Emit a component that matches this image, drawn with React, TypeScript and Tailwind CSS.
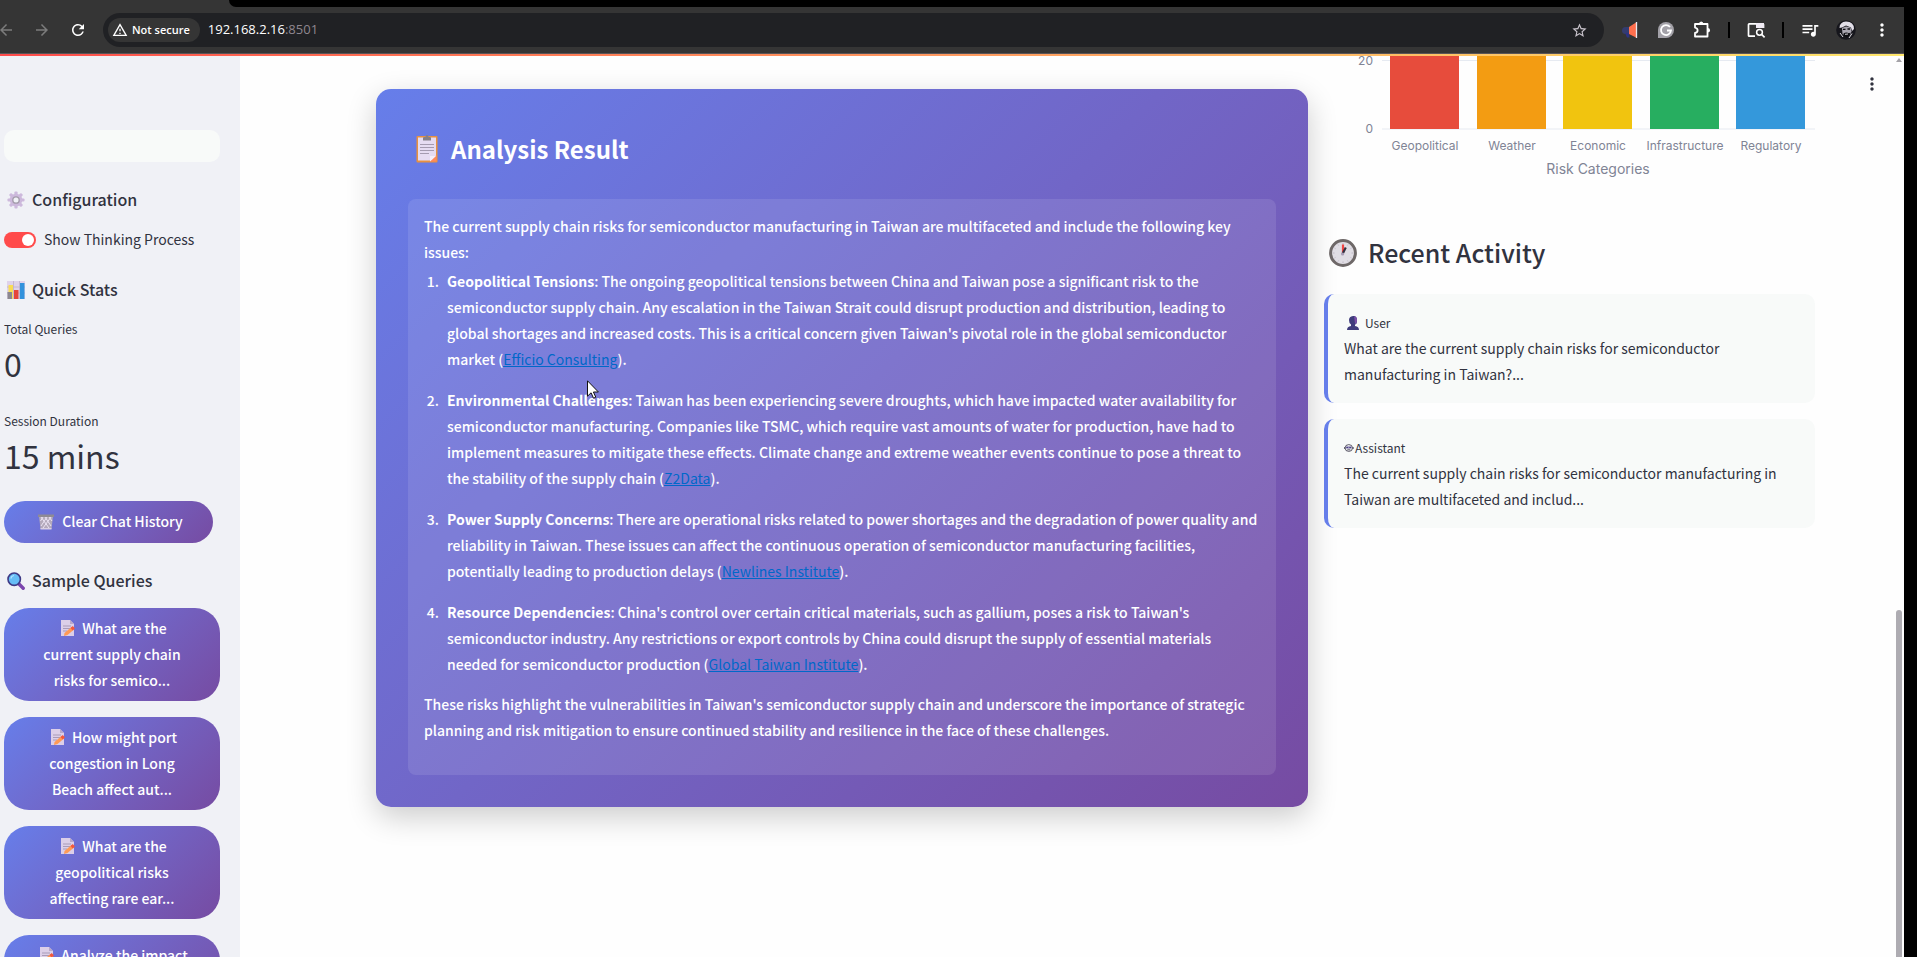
import type { ReactNode } from "react";
import {
  MdArrowBack,
  MdArrowForward,
  MdMoreVert,
  MdOutlineWarningAmber,
  MdQueueMusic,
  MdRefresh,
  MdStarBorder,
} from "react-icons/md";

/* ---------- pictograms ---------- */

type IconProps = { className?: string };

const Clipboard = ({ className }: IconProps) => (
  <svg viewBox="0 0 22 28" className={className} aria-hidden="true">
    <rect x="0.5" y="1" width="21" height="26.5" rx="1" fill="#e8913f" />
    <rect x="2" y="2.5" width="18" height="23" fill="#e6dcf2" />
    <path d="M7 5.5V3q0-1 1-1h1.500Q9.500 0 11 0t1.500 2H14q1 0 1 1v2.500z" fill="#858088" />
    <path d="M4 9.500h14M4 12.500h14M4 15.500h14M4 18.500h9" stroke="#a59bb0" strokeWidth="1.100" />
    <path d="M20.500 20v6.500H14z" fill="#ff8a5c" />
    <path d="M14 26.500V21h6z" fill="#f6effa" />
  </svg>
);

const Gear = ({ className }: IconProps) => (
  <svg viewBox="0 0 20 20" className={className} aria-hidden="true">
    <g fill="#cdb9dc">
      <rect x="8.200" y="0.500" width="3.600" height="19" rx="1.200" />
      <rect x="8.200" y="0.500" width="3.600" height="19" rx="1.200" transform="rotate(45 10 10)" />
      <rect x="8.200" y="0.500" width="3.600" height="19" rx="1.200" transform="rotate(90 10 10)" />
      <rect x="8.200" y="0.500" width="3.600" height="19" rx="1.200" transform="rotate(135 10 10)" />
      <circle cx="10" cy="10" r="7" />
    </g>
    <circle cx="10" cy="10" r="4.300" fill="#a49cab" />
    <circle cx="10" cy="10" r="2.800" fill="#f0f1f6" />
  </svg>
);

const BarChart = ({ className }: IconProps) => (
  <svg viewBox="0 0 18 18" className={className} aria-hidden="true">
    <rect width="18" height="18" fill="#ded2ea" />
    <path d="M6.500 0v18M12.500 0v18M0 6h18M0 12h18" stroke="#bdb0ca" strokeWidth="0.800" />
    <rect x="1.500" y="4" width="4.500" height="14" fill="#f8dc55" />
    <rect x="0.500" y="11" width="4.500" height="7" fill="#8c8890" />
    <rect x="7" y="9" width="4.500" height="9" fill="#e5443b" />
    <rect x="13" y="2" width="4.500" height="16" fill="#3292dc" />
  </svg>
);

const Wastebasket = ({ className }: IconProps) => (
  <svg viewBox="0 0 16 16" className={className} aria-hidden="true">
    <path d="M1 2h14l-1.500 13h-11z" fill="#b4aabb" />
    <path
      d="M3 3l8 11M7 3l6 9M11 3l3 4M13 3L5 14M9 3l-6 9M5 3L2.500 7"
      stroke="#ece4f4"
      strokeWidth="1"
    />
    <path d="M0 0.500h16V3H0z" fill="#8f8b94" />
    <path d="M2.500 14h11v1.500h-11z" fill="#d9cfe2" />
  </svg>
);

const Magnifier = ({ className }: IconProps) => (
  <svg viewBox="0 0 18 18" className={className} aria-hidden="true">
    <path d="M11.500 11.500l4.700 4.700" stroke="#7b45ad" strokeWidth="3.400" strokeLinecap="round" />
    <circle cx="7.200" cy="7.200" r="6.200" fill="#66bdf5" stroke="#3e3a86" strokeWidth="1.600" />
    <path d="M3.800 6.500A4 4 0 0 1 7 3.500" stroke="#b5e3ff" strokeWidth="1.200" fill="none" />
  </svg>
);

const Memo = ({ className }: IconProps) => (
  <svg viewBox="1 0 14 16" className={className} aria-hidden="true">
    <path d="M1 0h9l4 4v12H1z" fill="#dccfe8" />
    <path d="M10 0l4 4h-4z" fill="#b9a8c9" />
    <path d="M3 6h8M3 8.500h7M3 11h4" stroke="#a99bb8" strokeWidth="1" />
    <path d="M4.500 13l7-6 2.500 2.500-6.500 5.500-3.500 1z" fill="#ff9a55" />
    <path d="M10.500 8l2.300-2 2.200 2.500-2.300 2z" fill="#f2583f" />
  </svg>
);

const Clock = ({ className }: IconProps) => (
  <svg viewBox="0 0 28 28" className={className} aria-hidden="true">
    <circle cx="14" cy="14" r="12.400" fill="#e0dde4" stroke="#6e6868" strokeWidth="3" />
    <path
      d="M14 4v1.500M14 22.500V24M4 14h1.500M22.500 14H24M19 5.500l-.6 1M9 5.500l.6 1M22.500 9l-1 .6M5.500 9l1 .6M22.500 19l-1-.6M5.500 19l1-.6M19 22.500l-.6-1M9 22.500l.6-1"
      stroke="#b9b3bf"
      strokeWidth="0.900"
    />
    <path d="M14 14V5.500" stroke="#f04545" strokeWidth="2.200" />
    <path d="M13.500 15l3.300-6.500" stroke="#33303f" strokeWidth="2.200" />
    <circle cx="13.600" cy="15" r="1.600" fill="#a79bb5" />
  </svg>
);

const Bust = ({ className }: IconProps) => (
  <svg viewBox="0 0 14 14" className={className} aria-hidden="true">
    <path d="M1 14q0-3.500 4-4V8.500Q3 7.500 3 4t4-4 4 4-2 4.500V10q4 .5 4 4z" fill="#3f3c7c" />
    <path d="M8 0.200q3 .8 3 3.800 0 3.200-1.800 4.300z" fill="#7b4fa8" />
  </svg>
);

const Robot = ({ className }: IconProps) => (
  <svg viewBox="0 0 10 10" className={className} aria-hidden="true">
    <ellipse cx="4.800" cy="5" rx="3.700" ry="3.400" fill="none" stroke="#4a4658" strokeWidth="0.900" />
    <path d="M0.400 4v2M9.200 4v2M3.300 6.800h3" stroke="#4a4658" strokeWidth="0.900" />
    <path d="M2.200 4.500h5.200" stroke="#4a3f86" strokeWidth="1.800" />
    <path d="M4.400 4.500h.8" stroke="#cfc4e0" strokeWidth="1.200" />
  </svg>
);

/* ---------- browser toolbar ---------- */

const Megaphone = () => (
  <svg viewBox="0 0 20 20" className="size-5" aria-hidden="true">
    <path d="M2 10.500Q2 7 5.500 7H10v7H5.500Q2 14 2 10.500z" fill="#343c70" />
    <path d="M5 13h4l.5 4.500H7z" fill="#2c3380" />
    <path d="M9 7l7-4.500v15L9 14z" fill="#ff6f4d" />
    <path d="M16.500 2v16" stroke="#e9e6ee" strokeWidth="1.300" />
  </svg>
);

const Grammar = () => (
  <svg viewBox="0 0 20 20" className="size-5" aria-hidden="true">
    <path d="M10 2a8 8 0 1 1 0 16H2v-8a8 8 0 0 1 8-8z" fill="#a3a1a8" />
    <path d="M14 7a5 5 0 1 0 1 3.500h-4" fill="none" stroke="#fff" strokeWidth="1.800" />
  </svg>
);

const Puzzle = () => (
  <svg viewBox="0 0 20 20" className="size-5" aria-hidden="true">
    <path
      d="M3 4h12.500v12.500H3V13q2.600-.4 2.600-2.700T3 7.600z"
      fill="none"
      stroke="#fff"
      strokeWidth="1.800"
      strokeLinejoin="round"
    />
    <path d="M7 4a2.200 2.600 0 0 1 4.400 0zM15.500 8a2.600 2.200 0 0 1 0 4.400z" fill="#fff" />
  </svg>
);

const SideSearch = () => (
  <svg viewBox="0 0 20 20" className="size-5" aria-hidden="true">
    <path d="M9 16.200H3.200q-.7 0-.7-.7V4.500q0-.7.700-.7h13.600q.700 0 .7.700V8" fill="none" stroke="#fff" strokeWidth="1.700" />
    <path d="M10 3h8v5h-8z" fill="#f1ecf5" />
    <circle cx="13.500" cy="12.300" r="2.900" fill="#353535" stroke="#fff" strokeWidth="1.500" />
    <path d="M15.600 14.400l3 3" stroke="#fff" strokeWidth="1.700" />
  </svg>
);

const Avatar = () => (
  <svg viewBox="0 0 20 20" className="size-5" aria-hidden="true">
    <circle cx="10" cy="10" r="9.800" fill="#16161c" />
    <path d="M3.500 8q0-6 6.500-6.500Q18 1.500 18 9l-2 2-1-3.500-5-2-4 2z" fill="#e2dfe8" />
    <path d="M6 8l4-1.500 4.500 1 1 4-1.500 3.500-4 2-3.500-3z" fill="#a9a6b0" />
    <path d="M7 9.300h2.500M11.500 9H14" stroke="#0c0c10" strokeWidth="1.300" />
    <path d="M7.500 13.500q2.500-2 5.500-.3l1.500-.7-1 3.500-3 1.500-3-1.500z" fill="#0c0c10" />
    <path d="M9 14.300l3-.3M4 13l3 4M16 13.500l-3 4.500" stroke="#efedf3" strokeWidth="0.900" />
  </svg>
);

const ToolButton = ({ label, children }: { label: string; children: ReactNode }) => (
  <button type="button" aria-label={label} className="flex w-5 shrink-0 items-center justify-center">
    {children}
  </button>
);

const Toolbar = () => (
  <header className="shrink-0 bg-[#353535] font-['Open_Sans',sans-serif] text-white">
    <div className="ml-[229px] h-[7px] rounded-bl-lg bg-black" />
    <div className="flex h-[46px] items-center gap-4 pr-3">
      <nav className="flex items-center gap-[18px]" aria-label="History">
        <button type="button" aria-label="Back" className="flex w-[15px] justify-end overflow-hidden text-[#7c7c7c]">
          <MdArrowBack className="size-[18px] shrink-0" />
        </button>
        <button type="button" aria-label="Forward" className="text-[#7c7c7c]">
          <MdArrowForward className="size-[18px]" />
        </button>
        <button type="button" aria-label="Reload">
          <MdRefresh className="size-[18px]" />
        </button>
      </nav>
      <div className="flex h-[34px] flex-1 items-center rounded-full bg-[#202124] pr-4 pl-[5px]">
        <button type="button" className="flex h-6 items-center gap-1 rounded-full bg-[#353535] pr-2.5 pl-1 text-[11px] font-semibold">
          <MdOutlineWarningAmber className="size-4" />
          Not secure
        </button>
        <span className="ml-2 text-[13px]">
          192.168.2.16<span className="text-[#8f878f]">:8501</span>
        </span>
        <button type="button" aria-label="Bookmark" className="ml-auto text-[#c9c4cc]">
          <MdStarBorder className="size-[17px]" />
        </button>
      </div>
      <ToolButton label="Announcements"><Megaphone /></ToolButton>
      <ToolButton label="Grammar"><Grammar /></ToolButton>
      <ToolButton label="Extensions"><Puzzle /></ToolButton>
      <span className="h-4 w-0.5 bg-black" />
      <ToolButton label="Search side panel"><SideSearch /></ToolButton>
      <span className="h-4 w-0.5 bg-black" />
      <ToolButton label="Media"><MdQueueMusic className="size-5" /></ToolButton>
      <ToolButton label="Profile"><Avatar /></ToolButton>
      <ToolButton label="Menu"><MdMoreVert className="size-5" /></ToolButton>
    </div>
    <div className="h-[3px] border-t border-[#5a5558] bg-linear-to-r from-[#ff4b4b] via-[#ff9a60] to-[#ffe76c]" />
  </header>
);

/* ---------- sidebar ---------- */

const queries = [
  "What are the current supply chain risks for semico...",
  "How might port congestion in Long Beach affect aut...",
  "What are the geopolitical risks affecting rare ear...",
  "Analyze the impact",
];

const SideHeading = ({ icon, children }: { icon: ReactNode; children: ReactNode }) => (
  <h3 className="flex h-7 items-center gap-[7px] pl-[3px] text-[16px] leading-6 font-medium">
    {icon}
    <span className="pb-0.5">{children}</span>
  </h3>
);

const Metric = ({ label, value }: { label: string; value: string }) => (
  <div>
    <dt className="text-[12px] leading-5">{label}</dt>
    <dd className="mt-1 mb-0.5 text-[32px] leading-10">{value}</dd>
  </div>
);

const Sidebar = () => (
  <aside className="w-60 shrink-0 overflow-hidden bg-[#f0f1f6] pt-[74px] pr-5 pl-1">
    <div className="mb-6 h-8 rounded-[10px] bg-[#f8faf9]" />
    <SideHeading icon={<Gear className="size-[18px]" />}>Configuration</SideHeading>
    <label className="mt-3.5 flex h-6 items-center gap-2 text-[14px] leading-6">
      <input
        type="checkbox"
        role="switch"
        defaultChecked
        className="h-4 w-8 appearance-none rounded-full bg-[#ff4b4b] before:mt-0.5 before:ml-[18px] before:block before:size-3 before:rounded-full before:bg-white"
      />
      <span className="pb-0.5">Show Thinking Process</span>
    </label>
    <div className="mt-6">
      <SideHeading icon={<BarChart className="size-[18px]" />}>Quick Stats</SideHeading>
    </div>
    <dl className="mt-[15px] flex flex-col gap-[26px]">
      <Metric label="Total Queries" value="0" />
      <Metric label="Session Duration" value="15 mins" />
    </dl>
    <button
      type="button"
      className="mt-6 flex h-[42px] w-[209px] items-center justify-center gap-2 rounded-[25px] bg-linear-135 from-[#667eea] to-[#764ba2] pl-1 text-[14px] leading-6 font-medium text-white"
    >
      <Wastebasket className="size-4" />
      <span className="pb-0.5">Clear Chat History</span>
    </button>
    <div className="mt-6">
      <SideHeading icon={<Magnifier className="size-[18px]" />}>Sample Queries</SideHeading>
    </div>
    <div className="mt-[13px] flex flex-col gap-4">
      {queries.map((query) => (
        <button
          key={query}
          type="button"
          className="flex min-h-[93px] items-start justify-center rounded-[25px] bg-linear-135 from-[#667eea] to-[#764ba2] px-7 pt-[7px] text-center text-[14px] leading-[26px] font-medium text-white"
        >
          <span>
            <Memo className="mr-[7px] ml-1 inline-block h-4 w-3.5 align-[-2px]" />
            {query}
          </span>
        </button>
      ))}
    </div>
  </aside>
);

/* ---------- analysis ---------- */

const risks = [
  {
    title: "Geopolitical Tensions",
    body: "The ongoing geopolitical tensions between China and Taiwan pose a significant risk to the semiconductor supply chain. Any escalation in the Taiwan Strait could disrupt production and distribution, leading to global shortages and increased costs. This is a critical concern given Taiwan's pivotal role in the global semiconductor market",
    source: "Efficio Consulting",
  },
  {
    title: "Environmental Challenges",
    body: "Taiwan has been experiencing severe droughts, which have impacted water availability for semiconductor manufacturing. Companies like TSMC, which require vast amounts of water for production, have had to implement measures to mitigate these effects. Climate change and extreme weather events continue to pose a threat to the stability of the supply chain",
    source: "Z2Data",
  },
  {
    title: "Power Supply Concerns",
    body: "There are operational risks related to power shortages and the degradation of power quality and reliability in Taiwan. These issues can affect the continuous operation of semiconductor manufacturing facilities, potentially leading to production delays",
    source: "Newlines Institute",
  },
  {
    title: "Resource Dependencies",
    body: "China's control over certain critical materials, such as gallium, poses a risk to Taiwan's semiconductor industry. Any restrictions or export controls by China could disrupt the supply of essential materials needed for semiconductor production",
    source: "Global Taiwan Institute",
  },
];

const Analysis = () => (
  <section className="rounded-[15px] bg-linear-135 from-[#667eea] to-[#764ba2] p-8 text-white shadow-[0_10px_30px_rgba(0,0,0,0.2)]">
    <h2 className="mb-[22px] flex h-14 items-center gap-[13px] pl-2 text-[24px] font-bold">
      <Clipboard className="h-7 w-[22px]" />
      Analysis Result
    </h2>
    <div className="rounded-lg bg-white/10 px-4 pt-3.5 pb-8 text-[14px] leading-[26px] font-medium">
      <p>
        The current supply chain risks for semiconductor manufacturing in Taiwan are multifaceted and include the
        following key issues:
      </p>
      <ol className="mt-[3px] mb-3.5 flex list-decimal flex-col gap-[15px] pl-[18px]">
        {risks.map((risk) => (
          <li key={risk.title} className="pl-[5px]">
            <strong className="font-bold">{risk.title}</strong>: {risk.body} (
            <a href="#" className="font-normal text-[#0068c9] underline">{risk.source}</a>).
          </li>
        ))}
      </ol>
      <p>
        These risks highlight the vulnerabilities in Taiwan's semiconductor supply chain and underscore the importance
        of strategic planning and risk mitigation to ensure continued stability and resilience in the face of these
        challenges.
      </p>
    </div>
  </section>
);

/* ---------- right column ---------- */

const bars = [
  { name: "Geopolitical", color: "#e74c3c", x: 66 },
  { name: "Weather", color: "#f39c12", x: 153 },
  { name: "Economic", color: "#f1c40f", x: 239 },
  { name: "Infrastructure", color: "#27ae60", x: 326 },
  { name: "Regulatory", color: "#3498db", x: 412 },
];

const RiskChart = () => (
  <svg viewBox="0 0 491 130" className="w-full font-['Inter',sans-serif]" fill="#808495" role="img" aria-label="Risk Categories">
    <path d="M58 4.500h433M58 73h433" stroke="#e6eaf1" />
    <text x="49" y="9" fontSize="12" textAnchor="end">20</text>
    <text x="49" y="77" fontSize="12" textAnchor="end">0</text>
    {bars.map((bar) => (
      <g key={bar.name}>
        <rect x={bar.x} y="0" width="69" height="73" fill={bar.color} />
        <text x={bar.x + 35} y="94" fontSize="12" textAnchor="middle">{bar.name}</text>
      </g>
    ))}
    <text x="274" y="118" fontSize="14" textAnchor="middle">Risk Categories</text>
  </svg>
);

const Activity = ({ icon, who, text }: { icon: ReactNode; who: string; text: string }) => (
  <article className="rounded-[10px] border-l-4 border-[#667eea] bg-[#f8faf9] px-4 pt-[15px] pb-4 text-[14px] leading-[26px]">
    <h3 className="flex h-[26px] items-center pt-0.5 text-[12px]">
      {icon}
      {who}
    </h3>
    <p>{text}</p>
  </article>
);

const RightColumn = () => (
  <div className="self-start">
    <RiskChart />
    <h2 className="mt-10 flex h-[54px] items-center gap-[11px] pl-[5px] text-[25px] font-medium">
      <Clock className="size-7" />
      Recent Activity
    </h2>
    <div className="mt-3.5 flex flex-col gap-4">
      <Activity
        icon={<Bust className="mr-[5px] ml-0.5 size-3.5" />}
        who="User"
        text="What are the current supply chain risks for semiconductor manufacturing in Taiwan?..."
      />
      <Activity
        icon={<Robot className="mr-px size-2.5" />}
        who="Assistant"
        text="The current supply chain risks for semiconductor manufacturing in Taiwan are multifaceted and includ..."
      />
    </div>
  </div>
);

export default function App() {
  return (
    <div className="relative flex h-screen flex-col overflow-hidden bg-black pr-[13px] font-['Noto_Sans_CJK_SC',sans-serif] text-[#31333f]">
      <Toolbar />
      <div className="flex min-h-0 flex-1 bg-[#fefefe]">
        <Sidebar />
        <main className="grid min-w-0 flex-1 grid-cols-[932fr_491fr] gap-4 pl-[136px]">
          <div className="pt-[33px]">
            <Analysis />
          </div>
          <RightColumn />
        </main>
        <div className="flex w-[89px] shrink-0 justify-end gap-3.5 pr-0.5">
          <button type="button" aria-label="Page menu" className="mt-[18px] h-5 self-start">
            <MdMoreVert className="size-5" />
          </button>
          <div className="flex w-1.5 flex-col items-center justify-between">
            <svg viewBox="0 0 6 4" className="mt-0.5 h-1 w-1.5" aria-hidden="true">
              <path d="M3 0l3 4H0z" fill="#a5a3a8" />
            </svg>
            <div className="h-[347px] w-1.5 rounded-t-full bg-[#aeacb2]" />
          </div>
        </div>
      </div>
      <svg viewBox="0 0 12 19" className="absolute top-[380px] left-[587px] h-[19px] w-3" aria-hidden="true">
        <path d="M.5.8v15.400l3.600-3.400 2.400 5.400 2.300-1-2.400-5.200h5z" fill="#fff" stroke="#111" />
      </svg>
    </div>
  );
}
